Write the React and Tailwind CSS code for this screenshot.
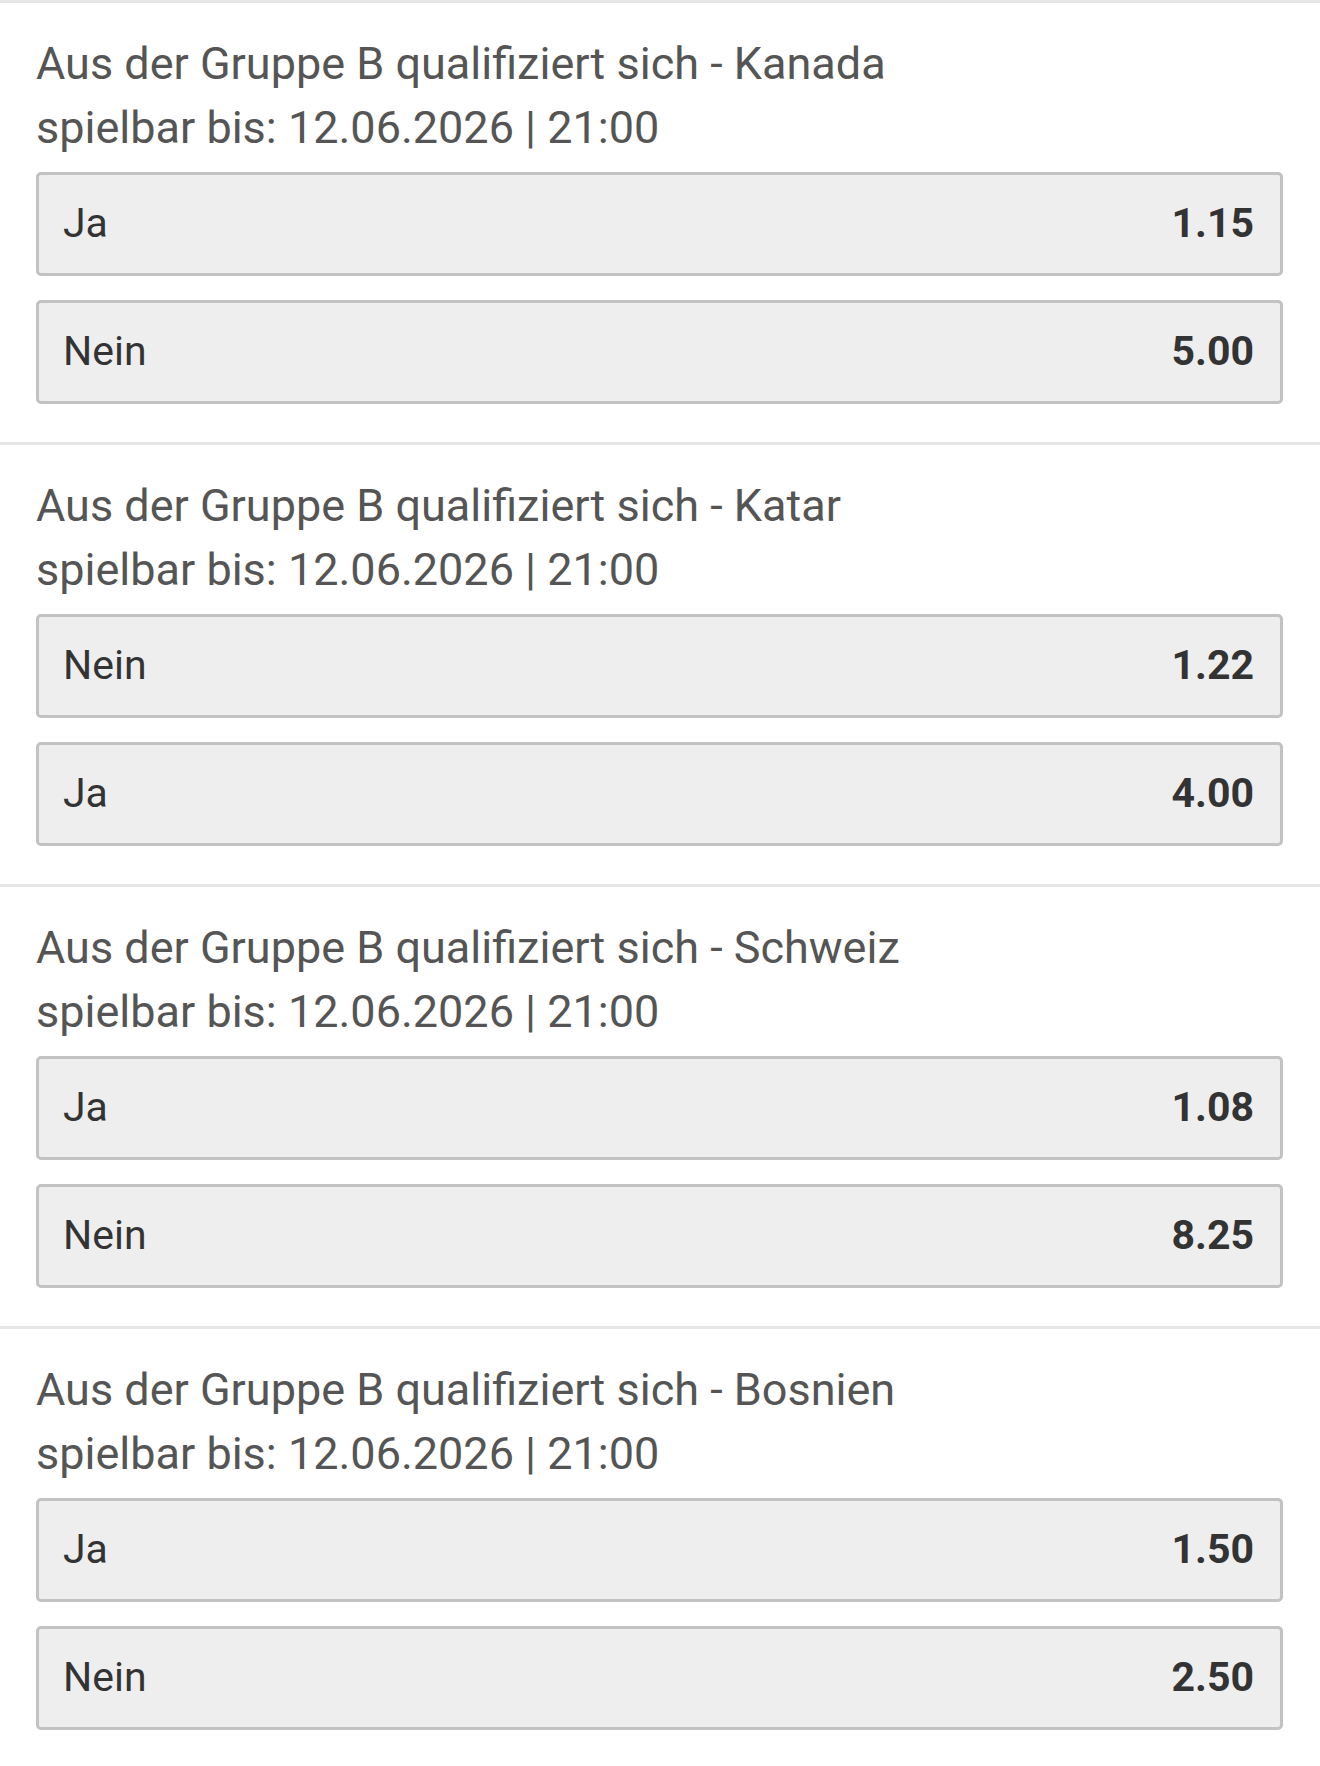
import React from 'react';

const markets = [
	{ team: "Kanada", options: [["Ja", "1.15"], ["Nein", "5.00"]] },
	{ team: "Katar", options: [["Nein", "1.22"], ["Ja", "4.00"]] },
	{ team: "Schweiz", options: [["Ja", "1.08"], ["Nein", "8.25"]] },
	{ team: "Bosnien", options: [["Ja", "1.50"], ["Nein", "2.50"]] },
];

function OddsButton(props) {
	return (
		<div className="h-[104px] flex items-center justify-between pl-[24px] pr-[26px] bg-[#eeeeee] border-[3px] border-[#c2c2c2] rounded-[5px] text-[41px] text-[#333333]">
			<span>{props.label}</span>
			<span className="font-bold">{props.odds}</span>
		</div>
	);
}

function Market(props) {
	return (
		<div className="border-t-[3px] border-[#e6e6e6] pt-[29px] pb-[38px] pl-[36px] pr-[37px]">
			<div className="text-[45px] leading-[64px] text-[#555555]">
				<div>Aus der Gruppe B qualifiziert sich - {props.team}</div>
				<div>spielbar bis: 12.06.2026 | 21:00</div>
			</div>
			<div className="mt-[12px] flex flex-col gap-[24px]">
				{props.options.map((o) => (
					<OddsButton key={o[0]} label={o[0]} odds={o[1]} />
				))}
			</div>
		</div>
	);
}

export default function App() {
	return (
		<div className="w-[1320px] min-h-[1766px] bg-white" style={{ fontFamily: "Roboto, 'Liberation Sans', sans-serif" }}>
			{markets.map((m) => (
				<Market key={m.team} team={m.team} options={m.options} />
			))}
		</div>
	);
}
